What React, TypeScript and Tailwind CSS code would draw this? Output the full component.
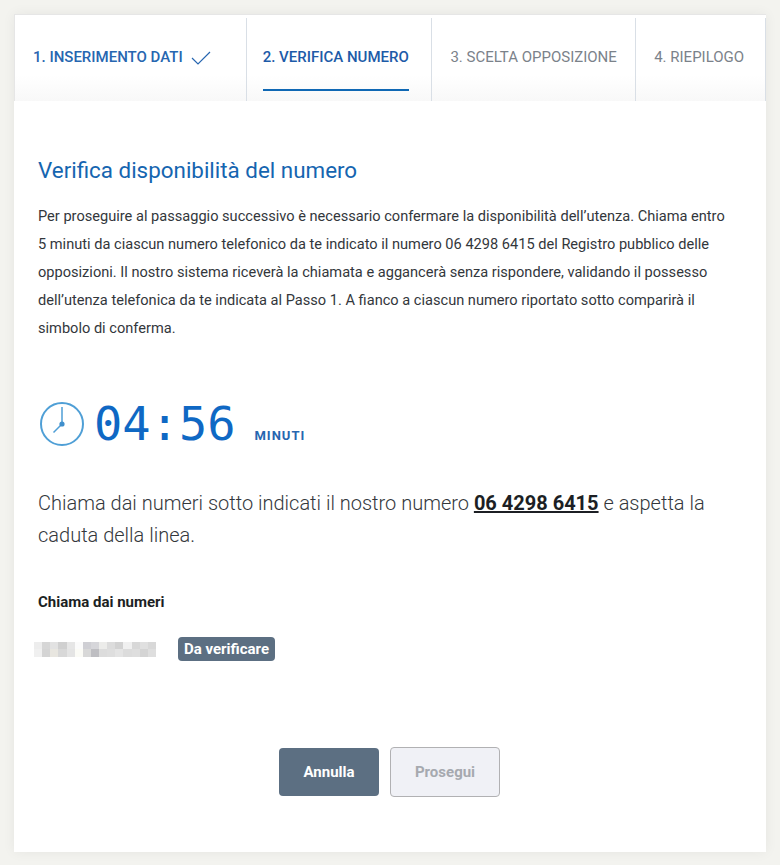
import React from "react"

const steps = [
	{ label: "1. INSERIMENTO DATI", width: "w-[232px]", pl: "pl-[18px]", state: "done" },
	{ label: "2. VERIFICA NUMERO", width: "w-[186px]", pl: "pl-[16px]", state: "active" },
	{ label: "3. SCELTA OPPOSIZIONE", width: "w-[204px]", pl: "pl-[18px]", state: "todo" },
	{ label: "4. RIEPILOGO", width: "w-[130px]", pl: "pl-[18px]", state: "todo" },
]

// pixelated number, colours read off the reference
const blurCells = [
	"#ededed", "#d6d6d6", "#e2e2e2", "#d0d0d0", "#e6e6e6", "#fbfbfb", "#cfcfd4", "#d6d6da", "#ececea", "#dcdcdc", "#d2d2d2", "#f0f0f0", "#d8d8d8", "#e0e0e0", "#d8d8d8",
	"#f0f0f0", "#d4d4d4", "#e8e6e0", "#d8d8d8", "#e4e4e4", "#fbfbf6", "#d8d8d8", "#bebec2", "#dcdcdc", "#dedede", "#e4e4e4", "#dcdcdc", "#dedede", "#d4d4d4", "#dedede",
]

function ClockIcon() {
	return (
		<svg width="44" height="44" viewBox="0 0 44 44" fill="none" className="ml-[2px] shrink-0">
			<circle cx="22" cy="22" r="21" stroke="#4f9fd6" strokeWidth="2" />
			<path d="M22 5v17M22 22l-8.5 8.5" stroke="#4f9fd6" strokeWidth="1.5" />
			<circle cx="22" cy="22" r="2.6" fill="#3f8fcc" />
		</svg>
	)
}

export default function App() {
	return (
		<div className="min-h-[865px] bg-[#f3f3ef] px-[14px] pt-[14px] font-['Roboto',sans-serif] text-[#2b2e33]">
			<div className="w-[752px] shadow-[0_0_12px_rgba(0,0,0,0.06)]">
				<div className="flex h-[87px] border-t border-l border-[#e6e6e6] bg-gradient-to-b from-white from-70% to-[#f8f8f8] pt-[3px]">
					{steps.map((s) => (
						<div key={s.label} className={`${s.width} flex h-[83px] border-r border-[#d9dfe6] ${s.pl}`}>
							<div
								className={`flex h-[73px] items-center gap-2 border-b-2 pt-[8px] text-[15px] leading-none ${
									s.state === "active" ? "border-[#0f68b4] font-medium text-[#1d5ba8]" : "border-transparent"
								} ${s.state === "done" ? "font-medium text-[#2766b0]" : ""} ${
									s.state === "todo" ? "text-[#7b828a]" : ""
								}`}
							>
								{s.label}
								{s.state === "done" && (
									<svg width="20" height="14" viewBox="0 0 20 14" fill="none">
										<path d="M1 7l6 6L19 1" stroke="#2766b0" strokeWidth="1.2" />
									</svg>
								)}
							</div>
						</div>
					))}
				</div>
				<div className="h-[751px] bg-white px-6 pt-[54px]">
					<h1 className="text-[22.4px] leading-[30px] text-[#1565b0]">Verifica disponibilità del numero</h1>
					<p className="mt-[17px] text-[14.6px] leading-[28px] text-[#33373c]">
						Per proseguire al passaggio successivo è necessario confermare la disponibilità dell’utenza. Chiama entro
						<br />5 minuti da ciascun numero telefonico da te indicato il numero 06 4298 6415 del Registro pubblico delle
						<br />opposizioni. Il nostro sistema riceverà la chiamata e aggancerà senza rispondere, validando il possesso
						<br />dell’utenza telefonica da te indicata al Passo 1. A fianco a ciascun numero riportato sotto comparirà il
						<br />simbolo di conferma.
					</p>
					<div className="mt-[57px] flex items-center">
						<ClockIcon />
						<span className="ml-[10px] font-['DejaVu_Sans_Mono',monospace] text-[47px] leading-[50px] text-[#0f68c4]">
							04:56
						</span>
						<span className="ml-[19px] mt-[24px] text-[13px] font-bold tracking-[1px] text-[#2766b0]">MINUTI</span>
					</div>
					<p className="mt-[38px] text-[20px] font-light leading-[32px] text-[#33373c]">
						Chiama dai numeri sotto indicati il nostro numero{" "}
						<a className="font-bold text-[#1c1f24] underline">06 4298 6415</a> e aspetta la
						<br />caduta della linea.
					</p>
					<h2 className="mt-[41px] text-[15px] font-bold leading-5 text-[#1c1f24]">Chiama dai numeri</h2>
					<div className="mt-[25px] flex items-center">
						<div className="-ml-[4px] grid h-[15px] w-[122px] grid-cols-15 grid-rows-2 blur-[0.5px]">
							{blurCells.map((c, i) => (
								<div key={i} style={{ backgroundColor: c }} />
							))}
						</div>
						<span className="ml-[22px] rounded-[4px] bg-[#5c6f82] px-[6px] text-[15px] font-bold leading-6 text-white">
							Da verificare
						</span>
					</div>
					<div className="mt-[86px] flex justify-center gap-[11px] pr-px">
						<button className="mt-px h-[48px] w-[100px] rounded-[4px] bg-[#5c6f82] text-[15px] font-bold text-white">
							Annulla
						</button>
						<button className="h-[50px] w-[110px] rounded-[4px] border border-[#b1b1b3] bg-[#f0f1f6] text-[15px] font-bold text-[#a6a9af]">
							Prosegui
						</button>
					</div>
				</div>
			</div>
		</div>
	)
}
